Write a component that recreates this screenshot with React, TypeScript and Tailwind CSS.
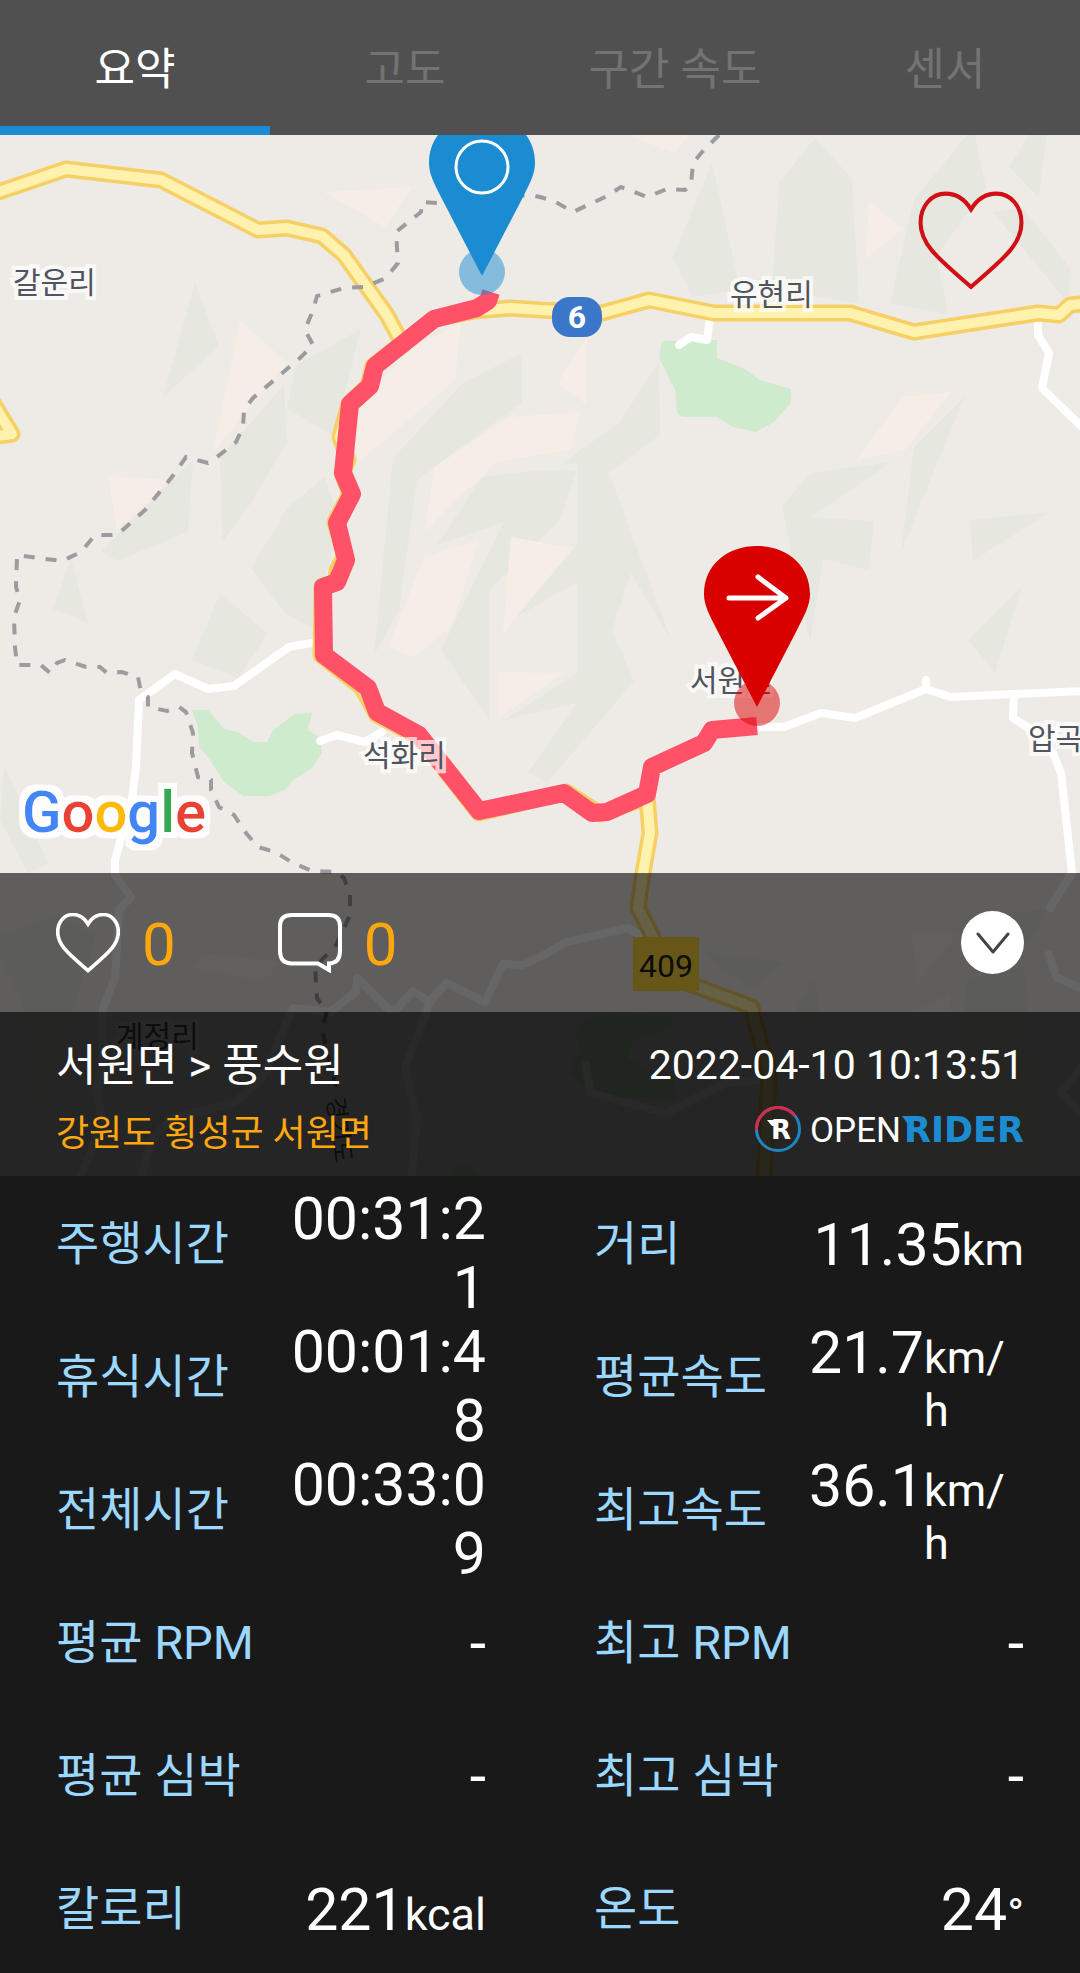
import React, { useState } from "react";

const TABS = ["요약", "고도", "구간 속도", "센서"];

type Stat = {
  label: string;
  value: string;
  unit?: string;
};

const STATS: Stat[] = [
  { label: "주행시간", value: "00:31:21" },
  { label: "거리", value: "11.35", unit: "km" },
  { label: "휴식시간", value: "00:01:48" },
  { label: "평균속도", value: "21.7", unit: "km/h" },
  { label: "전체시간", value: "00:33:09" },
  { label: "최고속도", value: "36.1", unit: "km/h" },
  { label: "평균 RPM", value: "-" },
  { label: "최고 RPM", value: "-" },
  { label: "평균 심박", value: "-" },
  { label: "최고 심박", value: "-" },
  { label: "칼로리", value: "221", unit: "kcal" },
  { label: "온도", value: "24", unit: "°" },
];

// shaded hillsides
const HILLS = [
  "195,283 219,346 163,397",
  "361,329 296,365 287,408 332,436 344,397",
  "284,385 220,458 222,543 253,500 287,442",
  "193,460 188,532 117,561 101,551 172,480",
  "325,477 288,507 251,568 284,612 312,628 340,520",
  "522,353 522,403 417,480 399,610 374,655 389,500 393,458 463,383",
  "540,470 482,477 437,545 504,522 441,650 489,720 489,590 560,520 577,470",
  "659,362 660,435 609,473 619,500 671,640 631,573 612,631 634,681 547,783 528,772 577,703 504,720 577,673 577,582 516,617 577,545 577,463 540,470 557,467 619,423",
  "712,163 673,257 693,297 740,290",
  "815,138 852,179 859,303 772,290 779,183",
  "967,135 975,135 986,187 936,257 949,315 890,303 914,200",
  "993,212 1022,207 1070,268 1068,303",
  "1029,135 1047,135 1039,198 1009,167",
  "965,396 914,447 901,553 922,500",
  "891,462 810,473 782,507 810,643 823,559 869,570 874,521 810,517 836,500",
  "970,520 1050,512 973,561",
  "1022,586 995,673 968,640",
  "71,559 88,623 53,609",
  "220,593 268,634 238,678 192,660",
  "4,765 48,863 28,873 0,820",
  "0,935 55,915 96,935 38,1127 21,1002 0,960",
  "702,952 784,962 750,990",
  "815,978 824,1045 790,1018",
  "1013,913 1051,908 1025,948",
  "967,978 1024,968 1036,1065 1050,1158 1015,1168 881,1175 884,1130 960,1045",
];

// sun-lit slopes
const SLOPES = [
  "324,192 412,187 385,227",
  "240,321 287,363 213,452",
  "108,476 170,480 117,530",
  "461,323 455,380 358,463 351,413 413,347",
  "580,412 510,417 434,467 425,532 455,500 482,477 496,462 571,450",
  "587,337 586,404 558,383",
  "479,540 424,557 388,647 413,657 451,628",
  "511,537 573,548 540,588 503,633",
  "499,672 564,673 498,718",
  "869,200 902,229 866,259",
  "951,392 903,397 856,460 905,450",
  "626,135 689,135 675,153",
  "203,953 282,962 263,981 191,968",
  "912,932 958,933 917,985",
  "950,993 950,1012 912,1012",
];

const FORESTS = [
  "662,341 717,340 717,358 745,369 760,380 791,389 791,403 774,422 756,432 733,427 717,417 682,417 677,412 675,390 659,358",
  "192,710 208,710 224,729 238,732 254,742 267,742 273,730 295,714 312,713 308,730 320,738 322,753 312,768 293,780 285,790 269,796 243,796 224,782 208,757 199,747 198,727",
  "585,1018 609,1013 673,1015 671,1028 633,1042 628,1058 674,1082 676,1100 592,1095 569,1072 580,1048 574,1032",
  "449,1176 456,1164 468,1163 478,1176",
];

const MINOR_ROADS = [
  "312,643 289,647 234,686 208,689 175,674 139,700 136,767 132,800 115,860 115,875 131,897 119,910 115,978 103,1008 103,1065 96,1092 103,1122 79,1180",
  "320,741 337,735 365,742 382,732",
  "757,727 784,727 821,713 855,718 926,689 926,680 926,689 951,697 1014,694 1085,691",
  "1014,696 1013,718 1032,730 1053,753 1061,773 1072,873 1050,908",
  "1049,954 1056,977 1085,990",
  "1038,318 1038,335 1049,353 1042,388 1085,430",
  "710,318 707,340 691,337 679,345",
  "141,1180 151,1140 172,1118 234,1103 262,1078 293,1008 330,1012 356,992 357,978 389,1010 396,1010 413,991 430,1002 446,983 485,1002 503,964 523,965 540,957 567,942 628,928 645,938",
  "446,983 430,1002 405,1068 417,1118 411,1180",
  "586,1065 590,1093 666,1113 726,1083 760,1080",
  "1085,1065 1060,1092 1085,1118",
];

const MAIN_ROADS = [
  "-10,195 66,169 161,180 258,230 287,228 322,236 344,255 387,315 403,345",
  "-10,398 12,434 -10,437",
  "1090,303 1070,305 1059,315 1038,313 914,332 850,313 714,313 649,300 602,313 540,310 510,308 475,311 434,319 373,366 368,386 349,404 340,437 348,460 342,473 350,494 335,522 345,556 337,570 336,582 322,587 321,655 362,688 377,715 419,737 479,813 566,792 600,814 647,797 650,833 643,873 638,908 652,935 670,978 698,987 752,1007 755,1022 769,1072 764,1180",
];

const BORDER =
  "719,135 702,152 693,163 691,185 685,190 667,189 647,197 621,187 605,197 573,212 554,201 540,197 530,195 437,203 422,202 421,212 396,232 398,263 386,278 365,287 344,288 317,296 313,310 305,330 313,345 300,358 253,398 244,410 243,427 236,442 217,457 208,463 186,457 172,477 145,510 117,535 95,535 81,552 62,561 38,558 17,555 16,587 20,600 14,617 15,647 17,665 41,665 50,673 57,663 65,660 86,667 100,667 107,673 122,672 138,677 141,692 148,697 148,707 167,711 179,707 186,712 193,733 192,753 198,777 211,780 211,790 219,807 234,815 246,833 258,847 275,852 293,863 312,871 337,872 344,878 350,895 350,915 336,945 315,967 317,998 327,1012 322,1028 327,1052 337,1090";

const ROUTE =
  "491,292 488,301 477,308 434,319 375,366 370,386 350,404 343,473 352,494 337,523 346,560 337,582 323,587 324,655 368,688 377,712 419,735 479,811 564,793 592,813 607,812 647,794 652,767 704,743 712,730 757,726";

const PLACES = [
  { name: "갈운리", x: 13, y: 293 },
  { name: "유현리", x: 730, y: 305 },
  { name: "석화리", x: 363, y: 766 },
  { name: "서원면", x: 690, y: 691 },
  { name: "압곡리", x: 1028, y: 749 },
  { name: "계정리", x: 116, y: 1047 },
];

const Pin = ({ x, y, color, children }: { x: number; y: number; color: string; children: React.ReactNode }) => (
  <g transform={`translate(${x} ${y})`}>
    <circle cy="-4" r="23" fill={color} fillOpacity="0.5" />
    <path
      d="M0 0L-40 -77C-48 -93 -53 -102 -53 -113C-53 -142 -30 -161 0 -161C30 -161 53 -142 53 -113C53 -102 48 -93 40 -77Z"
      fill={color}
    />
    <g fill="none" stroke="#fff" strokeLinecap="round" strokeLinejoin="round">
      {children}
    </g>
  </g>
);

const RouteMap = () => (
  <svg
    viewBox="0 135 1080 1041"
    className="col-start-1 row-start-1 block h-auto w-full bg-[#eeebe6]"
    role="img"
    aria-label="주행 경로 지도"
  >
    <defs>
      {/* white rim round the whole word, behind every letter */}
      <filter id="rim" x="-10%" y="-20%" width="120%" height="140%">
        <feMorphology in="SourceAlpha" operator="dilate" radius="6" result="fat" />
        <feFlood floodColor="#fff" floodOpacity="0.9" />
        <feComposite in2="fat" operator="in" />
        <feMerge>
          <feMergeNode />
          <feMergeNode in="SourceGraphic" />
        </feMerge>
      </filter>
    </defs>

    {HILLS.map((p) => <polygon key={p} points={p} fill="#e6e7de" />)}
    {SLOPES.map((p) => <polygon key={p} points={p} fill="#f6ede6" />)}
    {FORESTS.map((p) => <polygon key={p} points={p} fill="#ceebcd" />)}

    <g fill="none" strokeLinejoin="round" strokeLinecap="round">
      {MINOR_ROADS.map((p) => <polyline key={p} points={p} stroke="#fff" strokeWidth="8" />)}
      {MAIN_ROADS.map((p) => <polyline key={p} points={p} stroke="#f6cf65" strokeWidth="17" />)}
      {MAIN_ROADS.map((p) => <polyline key={p} points={p} stroke="#fff2af" strokeWidth="10" />)}
    </g>
    <polyline points={BORDER} fill="none" stroke="#9b9ca0" strokeWidth="4" strokeDasharray="11 11" />
    <polyline points={ROUTE} fill="none" stroke="#ff5268" strokeWidth="18" strokeLinejoin="round" />

    <rect x="552" y="297" width="50" height="40" rx="18" fill="#3a77c8" />
    <text x="577" y="328" textAnchor="middle" fill="#fff" className="text-[32px] font-bold">6</text>
    <rect x="633" y="937" width="66" height="54" fill="#ffd93c" />
    <text x="666" y="977" textAnchor="middle" fill="#222" className="text-[32px]">409</text>

    <g fill="#50545c" stroke="#fff" strokeOpacity="0.7" strokeWidth="8" paintOrder="stroke" className="text-[30px]">
      {PLACES.map(({ name, x, y }) => <text key={name} x={x} y={y}>{name}</text>)}
    </g>
    <text transform="translate(327 1098) rotate(83)" fill="#50545c" className="text-[24px]">경기도</text>

    <Pin x={482} y={276} color="#1c8cd2">
      <circle cy="-109" r="26" strokeWidth="3" />
    </Pin>
    <Pin x={757} y={707} color="#d90000">
      <path d="M-28 -109H29M1 -130L29 -109L1 -89" strokeWidth="5" />
    </Pin>

    <text x="22" y="832" filter="url(#rim)" className="text-[58px] font-medium">
      <tspan fill="#4285f4">G</tspan>
      <tspan fill="#e94335">o</tspan>
      <tspan fill="#fbbc05">o</tspan>
      <tspan fill="#4285f4">g</tspan>
      <tspan fill="#34a853">l</tspan>
      <tspan fill="#e94335">e</tspan>
    </text>
  </svg>
);

const Heart = ({ className, strokeWidth }: { className: string; strokeWidth: number }) => (
  <svg viewBox="0 0 104 98" className={className} fill="none" stroke="currentColor" strokeWidth={strokeWidth} strokeLinejoin="miter">
    <path d="M52 18C46 8 37 2.500 27 2.500C13 2.500 2.500 15 2.500 31C2.500 53 21 67 52 94C83 67 101.500 53 101.500 31C101.500 15 91 2.500 77 2.500C67 2.500 58 8 52 18Z" />
  </svg>
);

const OpenRiderLogo = () => (
  <svg viewBox="0 0 270 58" className="h-[58px] w-[270px]" role="img" aria-label="OPENRIDER">
    <circle cx="24" cy="24" r="21.500" fill="none" stroke="#2085c4" strokeWidth="3" />
    <path d="M2.500 25A21.500 21.500 0 0 1 41 11" fill="none" stroke="#d9294f" strokeWidth="3" />
    <path d="M13 15H22V21H18Z" fill="#fff" />
    <text x="17" y="34" fill="#fff" className="font-['DejaVu_Sans'] text-[26px] font-bold">R</text>
    <text x="56" y="37" fill="#fff" className="text-[35px]">OPEN</text>
    <path d="M148 11H158V18H153Z" fill="#1c8cd2" />
    <text x="150" y="37" fill="#1c8cd2" className="font-['DejaVu_Sans'] text-[35px] font-bold">RIDER</text>
  </svg>
);

const StatRow = ({ label, value, unit }: Stat) => (
  <div className="flex h-[133px] items-center-safe">
    <dt className="w-1/2 shrink-0 pt-0.5 text-[47px] leading-[70px] whitespace-nowrap text-[#9bd7ff]">{label}</dt>
    <dd className="flex w-1/2 items-baseline justify-end pt-2 pb-1 text-white">
      <span className={`text-right text-[59px] leading-[69px] ${unit ? "shrink-0" : "break-all"}`}>{value}</span>
      {unit && <span className="min-w-0 text-[45px] leading-[53px] break-all">{unit}</span>}
    </dd>
  </div>
);

export default function App() {
  const [tab, setTab] = useState(0);
  const [liked, setLiked] = useState(false);

  return (
    <div className="min-h-screen bg-[#191919] font-[Roboto,'Noto_Sans_CJK_KR',sans-serif]">
      <nav role="tablist" className="grid grid-cols-4 bg-[#505050]">
        {TABS.map((name, i) => (
          <button
            key={name}
            role="tab"
            aria-selected={tab === i}
            onClick={() => setTab(i)}
            className={`h-[135px] border-b-[9px] pt-[14px] text-[44px] ${
              tab === i ? "border-[#1c8cd2] text-white" : "border-transparent text-[#737373]"
            }`}
          >
            {name}
          </button>
        ))}
      </nav>

      <section className="relative grid">
        <RouteMap />
        <button
          aria-label="좋아요"
          aria-pressed={liked}
          onClick={() => setLiked(!liked)}
          className="absolute top-14 right-14 text-[#d01014]"
        >
          <Heart className="h-[100px] w-[106px]" strokeWidth={4} />
        </button>

        <div className="z-10 col-start-1 row-start-1 self-end bg-black/60 text-white">
          <div className="flex h-[139px] items-center px-14">
            <button className="flex items-center gap-[22px]">
              <Heart className="h-[60px] w-16" strokeWidth={6} />
              <span className="pt-1 text-[60px] leading-[70px] text-[#ffa70f]">0</span>
            </button>
            <button className="ml-[102px] flex items-center gap-[22px]">
              <svg viewBox="0 0 64 60" className="h-[60px] w-16" fill="none" stroke="currentColor" strokeWidth="4">
                <path d="M14 2H50Q62 2 62 13V38Q62 50 51 50.500V57L40 50.500H14Q2 50.500 2 38V13Q2 2 14 2Z" />
              </svg>
              <span className="pt-1 text-[60px] leading-[70px] text-[#ffa70f]">0</span>
            </button>
            <button aria-label="접기" className="ml-auto flex size-[63px] items-center justify-center rounded-full bg-white text-[#444]">
              <svg viewBox="0 0 34 22" className="h-[22px] w-[34px]" fill="none" stroke="currentColor" strokeWidth="3" strokeLinecap="round" strokeLinejoin="round">
                <path d="M2 2L17 20L32 2" />
              </svg>
            </button>
          </div>

          <div className="bg-black/60 px-14 pt-5 pb-2">
            <div className="flex h-[68px] items-center justify-between">
              <h1 className="text-[44px]">서원면 &gt; 풍수원</h1>
              <time className="text-[41px]">2022-04-10 10:13:51</time>
            </div>
            <div className="flex h-[68px] items-center justify-between">
              <p className="text-[36px] text-[#ffa70f]">강원도 횡성군 서원면</p>
              <OpenRiderLogo />
            </div>
          </div>
        </div>
      </section>

      <dl className="grid grid-cols-2 gap-x-[108px] px-14">
        {STATS.map((stat) => <StatRow key={stat.label} {...stat} />)}
      </dl>
    </div>
  );
}
